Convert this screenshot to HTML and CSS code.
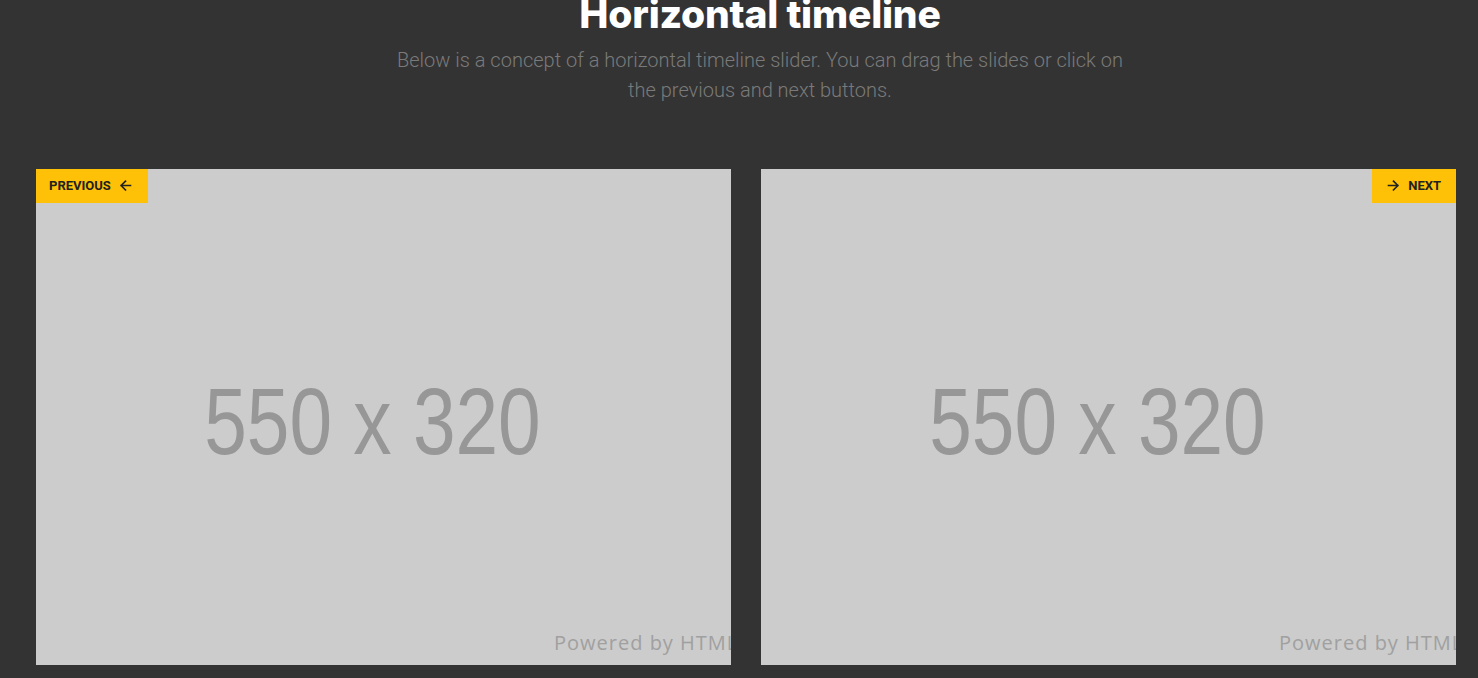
FILE: index.html
```html
<!DOCTYPE html>
<html lang="en">
<head>
<meta charset="utf-8">
<title>Horizontal timeline</title>
<link rel="stylesheet" href="styles.css">
</head>
<body>
<div class="page">
  <header class="intro">
    <h1 class="intro-title">Horizontal timeline</h1>
    <p class="intro-text">Below is a concept of a horizontal timeline slider. You can drag the slides or click on the previous and next buttons.</p>
  </header>
  <section class="slider">
    <div class="slide">
      <div class="placeholder">
        <span class="placeholder-size">550 x 320</span>
        <span class="placeholder-credit">Powered by HTML.COM</span>
      </div>
      <button class="nav-btn nav-prev" type="button">PREVIOUS
        <svg class="nav-icon" viewBox="0 0 24 24" width="15" height="15" aria-hidden="true"><path d="M20 12H5M12 19l-7-7 7-7" fill="none" stroke="currentColor" stroke-width="2.6" stroke-linecap="square"/></svg>
      </button>
    </div>
    <div class="slide">
      <div class="placeholder">
        <span class="placeholder-size">550 x 320</span>
        <span class="placeholder-credit">Powered by HTML.COM</span>
      </div>
      <button class="nav-btn nav-next" type="button">
        <svg class="nav-icon" viewBox="0 0 24 24" width="15" height="15" aria-hidden="true"><path d="M4 12h15M12 5l7 7-7 7" fill="none" stroke="currentColor" stroke-width="2.6" stroke-linecap="square"/></svg>
        NEXT</button>
    </div>
  </section>
</div>
</body>
</html>
```

FILE: styles.css
```css
html, body {
  margin: 0;
  padding: 0;
  overflow: hidden;
  background: #333333;
}

.page {
  width: 1520px;
  font-family: Roboto, "Liberation Sans", sans-serif;
}

.intro {
  text-align: center;
}

.intro-title {
  margin: -10px 0 0;
  font-family: Inter, Roboto, sans-serif;
  font-size: 39px;
  line-height: 48px;
  font-weight: 800;
  letter-spacing: -0.2px;
  color: #ffffff;
}

.intro-text {
  width: 740px;
  margin: 7px auto 0;
  font-size: 20px;
  line-height: 30px;
  font-weight: 300;
  color: #7a7a7a;
}

.slider {
  display: flex;
  gap: 30px;
  padding-left: 36px;
  margin-top: 64px;
}

.slide {
  position: relative;
  flex: 0 0 695px;
  height: 496px;
  background: #cccccc;
  overflow: hidden;
}

.placeholder {
  height: 100%;
  display: flex;
  align-items: center;
  justify-content: center;
  padding: 10px 22px 0 0;
  box-sizing: border-box;
}

.placeholder-size {
  display: inline-block;
  font-family: "Liberation Sans", Arial, sans-serif;
  font-size: 94px;
  line-height: 1;
  color: #979797;
  transform: scaleX(0.815);
  white-space: nowrap;
}

.placeholder-credit {
  position: absolute;
  left: 518px;
  top: 460px;
  font-family: "Open Sans", "DejaVu Sans", sans-serif;
  font-size: 20px;
  letter-spacing: 1px;
  color: #a0a0a0;
  white-space: nowrap;
}

.nav-btn {
  position: absolute;
  top: 0;
  height: 34px;
  display: flex;
  align-items: center;
  gap: 7px;
  padding: 0 14px 1px;
  border: 0;
  background: #ffc107;
  color: #222222;
  font-family: Roboto, sans-serif;
  font-size: 13px;
  font-weight: 700;
  cursor: pointer;
}

.nav-prev {
  left: 0;
  padding-left: 13px;
  padding-right: 15px;
}

.nav-next {
  right: 0;
  padding-left: 14px;
  padding-right: 15px;
}

.nav-icon {
  display: block;
}
```
